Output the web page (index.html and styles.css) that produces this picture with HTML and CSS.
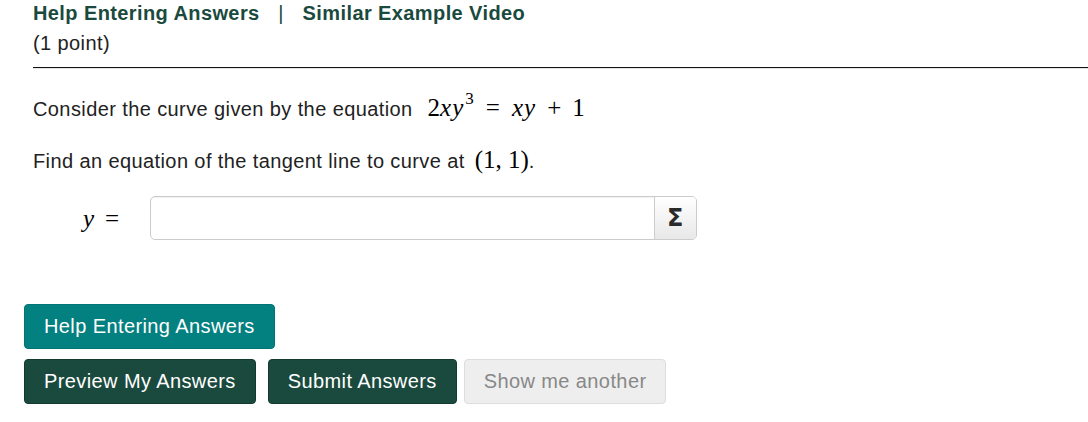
FILE: index.html
```html
<!DOCTYPE html>
<html>
<head>
<meta charset="utf-8">
<link rel="stylesheet" href="styles.css">
</head>
<body>
<div class="page">
  <div class="problem">
    <div class="links"><a class="link" href="#">Help Entering Answers</a><span class="sep">|</span><a class="link" href="#">Similar Example Video</a></div>
    <div class="points">(1 point)</div>
    <div class="rule"></div>
    <p class="line1">Consider the curve given by the equation<span class="math eq"><span class="mn">2</span><i>x</i><i>y</i><sup>3</sup><span class="rel">=</span><i>x</i><i>y</i><span class="bin">+</span><span class="mn">1</span></span></p>
    <p class="line2">Find an equation of the tangent line to curve at <span class="math pt">(1, 1)</span>.</p>
    <div class="answer">
      <span class="math label"><i>y</i><span class="rel">=</span></span>
      <div class="field">
        <div class="input"></div>
        <div class="sigma">Σ</div>
      </div>
    </div>
  </div>
  <div class="buttons">
    <div class="row"><button class="btn teal">Help Entering Answers</button></div>
    <div class="row">
      <button class="btn dark">Preview My Answers</button>
      <button class="btn dark">Submit Answers</button>
      <button class="btn light">Show me another</button>
    </div>
  </div>
</div>
</body>
</html>
```
FILE: styles.css
```css
html, body {
  margin: 0;
  padding: 0;
  background: #fff;
}
body {
  font-family: "Liberation Sans", Arial, sans-serif;
  color: #222;
  font-size: 20px;
  letter-spacing: 0.4px;
}
.page {
  padding-left: 24px;
}
.problem {
  padding-left: 9px;
}
.links {
  padding-top: 1px;
  height: 24px;
  line-height: 24px;
  font-weight: bold;
  white-space: nowrap;
}
.link {
  color: #1a4a3e;
  text-decoration: none;
}
.sep {
  display: inline-block;
  width: 43px;
  text-align: center;
  color: #1a4a3e;
  font-weight: normal;
}
.points {
  margin-top: 6px;
  line-height: 24px;
}
.rule {
  margin-top: 12px;
  border-top: 1px solid #111;
  border-bottom: 1px solid #e6e6e6;
}
.line1 {
  margin: 25px 0 0 0;
  line-height: 30px;
}
.line2 {
  margin: 22px 0 0 0;
  line-height: 30px;
}
.math {
  font-family: "Liberation Serif", "Times New Roman", serif;
  font-size: 25px;
  line-height: 1;
  color: #000;
  letter-spacing: 0;
}
.math i {
  font-style: italic;
  letter-spacing: 1px;
}
.eq {
  margin-left: 15px;
}
.math sup {
  font-size: 17px;
  line-height: 0;
  vertical-align: 12px;
  margin-left: 1px;
}
.rel {
  margin: 0 12px;
}
.bin {
  margin: 0 11px;
}
.pt {
  margin-left: 4px;
}
.answer {
  margin-top: 20px;
  display: flex;
  align-items: center;
}
.label {
  width: 67px;
  margin-left: 50px;
  white-space: nowrap;
}
.label .rel {
  margin: 0 0 0 10px;
}
.field {
  display: flex;
  width: 547px;
  height: 44px;
  box-sizing: border-box;
  border: 1px solid #ccc;
  border-radius: 5px;
  overflow: hidden;
  box-shadow: inset 0 1px 1px rgba(0, 0, 0, 0.06);
}
.input {
  flex: 1;
}
.sigma {
  width: 41px;
  border-left: 1px solid #ccc;
  background: linear-gradient(#fff, #e8e8e8);
  display: flex;
  align-items: center;
  justify-content: center;
  font-family: "DejaVu Sans", sans-serif;
  font-weight: bold;
  font-size: 24px;
  color: #2a2a2a;
}
.buttons {
  margin-top: 64px;
}
.row {
  display: flex;
  gap: 12px;
  margin-bottom: 10px;
}
.btn {
  font-family: "Liberation Sans", Arial, sans-serif;
  font-size: 20px;
  letter-spacing: 0.4px;
  height: 45px;
  padding: 0 19px;
  border-radius: 4px;
  border: 1px solid transparent;
  color: #fff;
}
.teal {
  background: #038080;
  border-color: #027474;
}
.dark {
  background: #1a4a3e;
  border-color: #123a30;
}
.light {
  background: #eee;
  border-color: #ddd;
  color: #888;
  margin-left: -5px;
}
```
